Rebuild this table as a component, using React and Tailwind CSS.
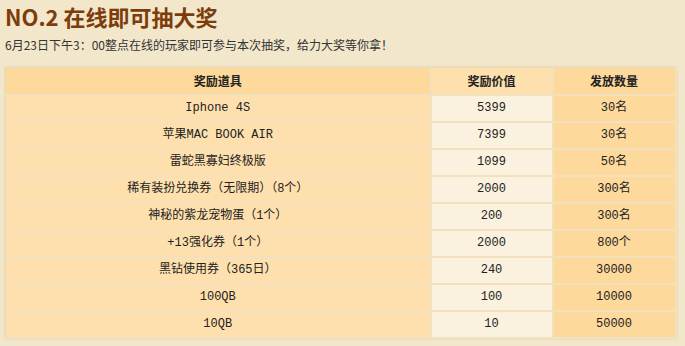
import React from "react";

const rows = [
	["Iphone 4S", "5399", "30名"],
	["苹果MAC BOOK AIR", "7399", "30名"],
	["雷蛇黑寡妇终极版", "1099", "50名"],
	["稀有装扮兑换券（无限期）（8个）", "2000", "300名"],
	["神秘的紫龙宠物蛋（1个）", "200", "300名"],
	["+13强化券（1个）", "2000", "800个"],
	["黑钻使用券（365日）", "240", "30000"],
	["100QB", "100", "10000"],
	["10QB", "10", "50000"],
];

const cell = "h-[27px] p-0 text-center align-middle border-b-2 border-r-2 border-[#f3e1bd]";

const App = () => {
	return (
		<div
			className="h-[346px] w-[685px] overflow-hidden bg-[#f2e7ca] text-[12px] text-[#222]"
			style={{ fontFamily: '"Liberation Mono", "Noto Sans CJK SC", monospace' }}
		>
			<h1
				className="pl-[5px] pt-[3px] text-[22px] font-bold leading-[26px] text-[#7c3c0b]"
				style={{ fontFamily: '"Noto Sans CJK SC", sans-serif' }}
			>
				NO.2 在线即可抽大奖
			</h1>
			<p
				className="mt-[9px] pl-[5px] text-[12px] leading-[14px] text-[#333]"
				style={{ fontFamily: '"Noto Sans CJK SC", sans-serif' }}
			>
				6月23日下午3：00整点在线的玩家即可参与本次抽奖，给力大奖等你拿！
			</p>

			<table className="ml-[5px] mt-[15px] w-[670px] table-fixed border-collapse border border-[#e8d8b3] shadow-[0_0_2px_rgba(180,150,90,0.3)]">
				<colgroup>
					<col className="w-[425px]" />
					<col className="w-[122px]" />
					<col className="w-[123px]" />
				</colgroup>
				<thead>
					<tr className="font-bold" style={{ fontFamily: '"Noto Sans CJK SC", sans-serif' }}>
						<th className={`${cell} bg-[#fed99c]`}>奖励道具</th>
						<th className={`${cell} bg-[#fee0ae]`}>奖励价值</th>
						<th className={`${cell} border-r-0 bg-[#fed99c]`}>发放数量</th>
					</tr>
				</thead>
				<tbody>
					{rows.map(([name, value, count], i) => (
						<tr key={i}>
							<td className={`${cell} bg-[#fee0ae] ${i === rows.length - 1 ? "border-b-0" : ""}`}>{name}</td>
							<td className={`${cell} bg-[#faf1de] ${i === rows.length - 1 ? "border-b-0" : ""}`}>{value}</td>
							<td className={`${cell} border-r-0 bg-[#fed99c] ${i === rows.length - 1 ? "border-b-0" : ""}`}>{count}</td>
						</tr>
					))}
				</tbody>
			</table>
		</div>
	);
};

export default App;
